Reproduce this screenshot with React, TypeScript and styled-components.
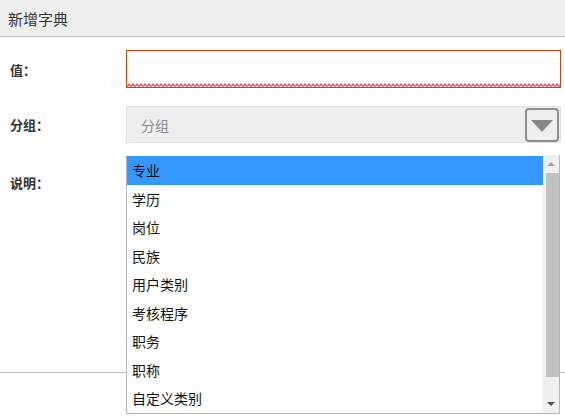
import React from 'react';
import styled, { createGlobalStyle } from 'styled-components';

const GlobalStyle = createGlobalStyle`
  html, body {
    margin: 0;
    padding: 0;
    background: #fff;
  }
  body {
    font-family: "Noto Sans CJK SC", "Noto Sans", sans-serif;
    color: #333;
  }
`;

const Dialog = styled.div`
  width: 565px;
  height: 416px;
  overflow: hidden;
  display: flex;
  flex-direction: column;
  background: #fff;
`;

const Header = styled.div`
  height: 36px;
  flex-shrink: 0;
  display: flex;
  align-items: center;
  padding-left: 8px;
  background: #eeeeee;
  border-bottom: 1px solid #c4bcbc;
  font-size: 15px;
  color: #333;
`;

const Body = styled.div`
  height: 335px;
  flex-shrink: 0;
  padding: 13px 4px 0 10px;
  box-sizing: border-box;
  display: flex;
  flex-direction: column;
  gap: 18px;
`;

const Footer = styled.div`
  flex: 1;
  border-top: 1px solid #c4bcbc;
`;

const Row = styled.div<{ $h: number }>`
  display: grid;
  grid-template-columns: 116px 1fr;
  align-items: center;
  height: ${(p) => p.$h}px;
`;

const Label = styled.label`
  font-size: 13px;
  font-weight: bold;
  color: #333;
`;

const InputBox = styled.div`
  position: relative;
  height: 38px;
  box-sizing: border-box;
  border: 1px solid #d43f0a;
  background: #fff;
`;

const Wavy = styled.svg`
  position: absolute;
  left: 0;
  right: 0;
  bottom: 0;
  width: 100%;
  height: 4px;
`;

const SelectBox = styled.div`
  position: relative;
  height: 37px;
  box-sizing: border-box;
  border: 1px solid #e2e2e2;
  background: #eeeeee;
  display: flex;
  align-items: center;
  padding-left: 14px;
  font-size: 14px;
  color: #888;
`;

const ArrowButton = styled.div`
  position: absolute;
  right: 1px;
  top: 1px;
  width: 34px;
  height: 34px;
  box-sizing: border-box;
  border: 2px solid #8c8c8c;
  border-radius: 4px;
  background: #eee;
  display: flex;
  align-items: center;
  justify-content: center;
`;

const Triangle = styled.div`
  width: 0;
  height: 0;
  border-left: 11px solid transparent;
  border-right: 11px solid transparent;
  border-top: 12px solid #878787;
  margin-top: 2px;
`;

const ListBox = styled.div`
  position: absolute;
  left: -1px;
  right: 0;
  top: 48px;
  height: 259px;
  box-sizing: border-box;
  border: 1px solid #b4b4c4;
  border-top: none;
  background: #fff;
  display: flex;
  z-index: 10;
`;

const Items = styled.div`
  flex: 1;
  padding-top: 1px;
`;

const Item = styled.div<{ $active?: boolean }>`
  height: 28.5px;
  display: flex;
  align-items: center;
  padding-left: 5px;
  font-size: 14px;
  color: #111;
  background: ${(p) => (p.$active ? '#3399ff' : 'transparent')};
`;

const ScrollBar = styled.div`
  width: 16px;
  background: #f0f0f0;
  display: flex;
  flex-direction: column;
  align-items: center;
`;

const ScrollArrow = styled.div<{ $up?: boolean }>`
  height: 18px;
  display: flex;
  align-items: center;
  justify-content: center;
  &::after {
    content: '';
    width: 0;
    height: 0;
    border-left: 4px solid transparent;
    border-right: 4px solid transparent;
    ${(p) =>
      p.$up ? 'border-bottom: 4px solid #a3a3a3;' : 'border-top: 4px solid #505050;'}
  }
`;

const Thumb = styled.div`
  width: 13px;
  margin-left: 2px;
  height: 204px;
  background: #c1c1c1;
`;

const Spacer = styled.div`
  flex: 1;
`;

const options = ['专业', '学历', '岗位', '民族', '用户类别', '考核程序', '职务', '职称', '自定义类别'];

export default function App() {
  return (
    <>
      <GlobalStyle />
      <Dialog>
        <Header>新增字典</Header>
        <Body>
          <Row $h={38}>
            <Label>值：</Label>
            <InputBox>
              <Wavy preserveAspectRatio="none">
                <defs>
                  <pattern id="zig" width="4" height="4" patternUnits="userSpaceOnUse">
                    <path d="M0 3.5 L2 1 L4 3.5" fill="none" stroke="#f25050" strokeWidth="1.4" />
                  </pattern>
                </defs>
                <rect width="100%" height="4" fill="url(#zig)" />
              </Wavy>
            </InputBox>
          </Row>
          <Row $h={37}>
            <Label>分组：</Label>
            <SelectBox>
              分组
              <ArrowButton>
                <Triangle />
              </ArrowButton>
              <ListBox>
                <Items>
                  {options.map((o, i) => (
                    <Item key={o} $active={i === 0}>
                      {o}
                    </Item>
                  ))}
                </Items>
                <ScrollBar>
                  <ScrollArrow $up />
                  <Thumb />
                  <Spacer />
                  <ScrollArrow />
                </ScrollBar>
              </ListBox>
            </SelectBox>
          </Row>
          <Row $h={42}>
            <Label>说明：</Label>
            <div />
          </Row>
        </Body>
        <Footer />
      </Dialog>
    </>
  );
}
